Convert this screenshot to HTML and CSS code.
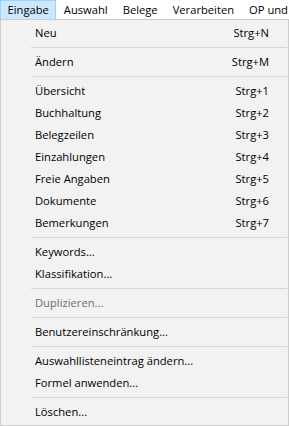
FILE: index.html
```
<!DOCTYPE html>
<html lang="de">
<head>
    <meta charset="UTF-8">
    <title>Eingabe</title>
    <link rel="stylesheet" href="styles.css">
</head>
<body>
    <div class="menubar">
        <div class="menubar-item active">Eingabe</div>
        <div class="menubar-item">Auswahl</div>
        <div class="menubar-item">Belege</div>
        <div class="menubar-item">Verarbeiten</div>
        <div class="menubar-item">OP und Mahnwesen</div>
    </div>
    <div class="menu">
        <div class="menu-item"><span>Neu</span><span class="shortcut">Strg+N</span></div>
        <div class="separator"></div>
        <div class="menu-item"><span>Ändern</span><span class="shortcut">Strg+M</span></div>
        <div class="separator"></div>
        <div class="menu-item"><span>Übersicht</span><span class="shortcut">Strg+1</span></div>
        <div class="menu-item"><span>Buchhaltung</span><span class="shortcut">Strg+2</span></div>
        <div class="menu-item"><span>Belegzeilen</span><span class="shortcut">Strg+3</span></div>
        <div class="menu-item"><span>Einzahlungen</span><span class="shortcut">Strg+4</span></div>
        <div class="menu-item"><span>Freie Angaben</span><span class="shortcut">Strg+5</span></div>
        <div class="menu-item"><span>Dokumente</span><span class="shortcut">Strg+6</span></div>
        <div class="menu-item"><span>Bemerkungen</span><span class="shortcut">Strg+7</span></div>
        <div class="separator"></div>
        <div class="menu-item"><span>Keywords...</span></div>
        <div class="menu-item"><span>Klassifikation...</span></div>
        <div class="separator"></div>
        <div class="menu-item disabled"><span>Duplizieren...</span></div>
        <div class="separator"></div>
        <div class="menu-item"><span>Benutzereinschränkung...</span></div>
        <div class="separator"></div>
        <div class="menu-item"><span>Auswahllisteneintrag ändern...</span></div>
        <div class="menu-item"><span>Formel anwenden...</span></div>
        <div class="separator"></div>
        <div class="menu-item"><span>Löschen...</span></div>
    </div>
</body>
</html>
```

FILE: styles.css
```
:root {
    --menu-bg: #f2f2f2;
    --menu-border: #cccccc;
    --separator: #d7d7d7;
    --hover-bg: #cce8ff;
    --hover-border: #99d1ff;
}
body {
    margin: 0;
    font-family: "Open Sans", "Noto Sans", sans-serif;
    font-size: 11.2px;
    color: #000;
    background-color: #fff;
    overflow: hidden;
}
.menubar {
    display: flex;
    height: 19px;
    white-space: nowrap;
    overflow: hidden;
    background-color: #fff;
}
.menubar-item {
    flex-shrink: 0;
    padding: 0 6.5px;
    line-height: 17px;
    border: 1px solid transparent;
    border-bottom: none;
}
.menubar-item.active {
    background-color: var(--hover-bg);
    border-color: var(--hover-border);
}
.menu {
    width: 289px;
    box-sizing: border-box;
    background-color: var(--menu-bg);
    border: 1px solid var(--menu-border);
    padding: 2px 0;
}
.menu-item {
    display: flex;
    justify-content: space-between;
    height: 22px;
    line-height: 22px;
    padding: 0 19px 0 34px;
}
.menu-item.disabled {
    color: #6d6d6d;
}
.separator {
    height: 1px;
    margin: 3px 1px 3px 30px;
    background-color: var(--separator);
}
```
